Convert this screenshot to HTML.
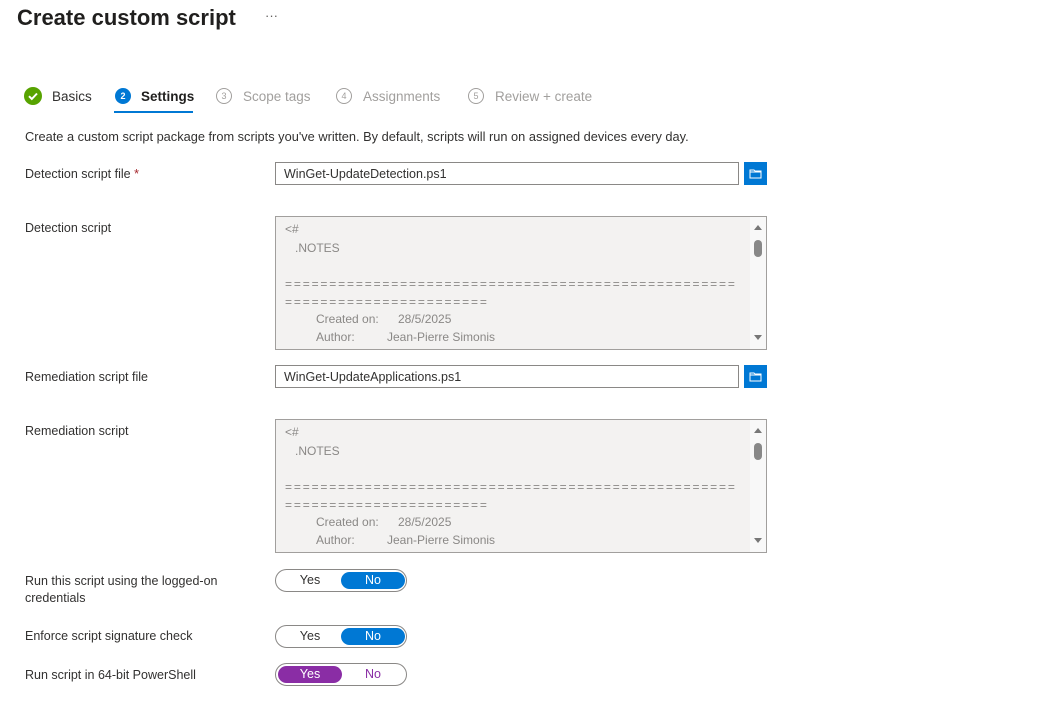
<!DOCTYPE html>
<html><head><style>
body{margin:0;width:1056px;height:723px;background:#fff;font-family:"Liberation Sans",sans-serif;color:#323130;position:relative;overflow:hidden}
.a{position:absolute;white-space:nowrap}
.lbl{font-size:12.5px;color:#323130}
.inp{position:absolute;border:1px solid #8a8886;height:23px;box-sizing:border-box;width:464px;left:275px;font-size:12.5px;padding:4px 8px;background:#fff}
.btn{position:absolute;left:744px;width:23px;height:23px;background:#0078d4}
.ta{position:absolute;left:275px;width:492px;height:134px;box-sizing:border-box;border:1px solid #a19f9d;background:#f3f2f1;font-size:12px;color:#8a8886;overflow:hidden}
.ta .l{position:absolute;left:9px;white-space:pre}
.ta .e{letter-spacing:1.85px}
.sb{position:absolute;right:0;top:0;width:16px;height:132px;background:#f8f8f8}
.tg{position:absolute;left:275px;width:132px;height:23px;box-sizing:border-box;border:1px solid #8a8886;border-radius:12px;font-size:12.5px}
.tg span{position:absolute;top:2px;width:64px;height:17px;line-height:17px;text-align:center;border-radius:9px}
.circ{position:absolute;top:88px;width:14px;height:14px;border:1px solid #a19f9d;border-radius:50%;font-size:9px;color:#a19f9d;text-align:center;line-height:14px}
</style></head><body>
<div class="a" style="left:17px;top:5px;font-size:22px;font-weight:600;color:#201f1e">Create custom script</div>
<div class="a" style="left:265px;top:8px;font-size:13px;color:#605e5c">···</div>

<svg class="a" style="left:24px;top:87px" width="18" height="18"><circle cx="9" cy="9" r="9" fill="#57a300"/><path d="M5 9.2l2.8 2.8L13 6.5" stroke="#fff" stroke-width="2" fill="none"/></svg>
<div class="a" style="left:52px;top:89px;font-size:13.5px">Basics</div>
<div class="a" style="left:115px;top:88px;width:16px;height:16px;border-radius:50%;background:#0078d4;color:#fff;font-size:9px;text-align:center;line-height:16px;font-weight:bold">2</div>
<div class="a" style="left:141px;top:89px;font-size:13.5px;font-weight:600;color:#201f1e">Settings</div>
<div class="a" style="left:114px;top:111px;width:79px;height:2px;background:#0078d4"></div>
<div class="circ" style="left:216px">3</div><div class="a" style="left:243px;top:89px;font-size:13.5px;color:#a19f9d">Scope tags</div>
<div class="circ" style="left:336px">4</div><div class="a" style="left:363px;top:89px;font-size:13.5px;color:#a19f9d">Assignments</div>
<div class="circ" style="left:468px">5</div><div class="a" style="left:495px;top:89px;font-size:13.5px;color:#a19f9d">Review + create</div>

<div class="a lbl" style="left:25px;top:129px;font-size:12.8px">Create a custom script package from scripts you've written. By default, scripts will run on assigned devices every day.</div>

<div class="a lbl" style="left:25px;top:167px">Detection script file <span style="color:#a4262c">*</span></div>
<div class="inp" style="top:162px">WinGet-UpdateDetection.ps1</div>
<div class="btn" style="top:162px"><svg width="23" height="23"><path d="M6 8h4l1 1h6v7H6z M6 10h11" stroke="#fff" fill="none"/></svg></div>

<div class="a lbl" style="left:25px;top:221px">Detection script</div>
<div class="ta" style="top:216px">
<div class="l" style="top:5px">&lt;#</div><div class="l" style="top:24px">   .NOTES</div>
<div class="l e" style="top:60px">===================================================</div>
<div class="l e" style="top:78px">=======================</div>
<div class="l" style="top:95px;left:40px">Created on:</div><div class="l" style="top:95px;left:122px">28/5/2025</div>
<div class="l" style="top:113px;left:40px">Author:</div><div class="l" style="top:113px;left:111px">Jean-Pierre Simonis</div>
<div class="sb"><div style="position:absolute;left:4px;top:8px;border:4px solid transparent;border-bottom:5px solid #777;border-top:0"></div><div style="position:absolute;left:4px;top:23px;width:8px;height:17px;border-radius:4px;background:#888"></div><div style="position:absolute;left:4px;top:118px;border:4px solid transparent;border-top:5px solid #777;border-bottom:0"></div></div>
</div>

<div class="a lbl" style="left:25px;top:370px">Remediation script file</div>
<div class="inp" style="top:365px">WinGet-UpdateApplications.ps1</div>
<div class="btn" style="top:365px"><svg width="23" height="23"><path d="M6 8h4l1 1h6v7H6z M6 10h11" stroke="#fff" fill="none"/></svg></div>

<div class="a lbl" style="left:25px;top:424px">Remediation script</div>
<div class="ta" style="top:419px">
<div class="l" style="top:5px">&lt;#</div><div class="l" style="top:24px">   .NOTES</div>
<div class="l e" style="top:60px">===================================================</div>
<div class="l e" style="top:78px">=======================</div>
<div class="l" style="top:95px;left:40px">Created on:</div><div class="l" style="top:95px;left:122px">28/5/2025</div>
<div class="l" style="top:113px;left:40px">Author:</div><div class="l" style="top:113px;left:111px">Jean-Pierre Simonis</div>
<div class="sb"><div style="position:absolute;left:4px;top:8px;border:4px solid transparent;border-bottom:5px solid #777;border-top:0"></div><div style="position:absolute;left:4px;top:23px;width:8px;height:17px;border-radius:4px;background:#888"></div><div style="position:absolute;left:4px;top:118px;border:4px solid transparent;border-top:5px solid #777;border-bottom:0"></div></div>
</div>

<div class="a lbl" style="left:25px;top:573px;line-height:17px">Run this script using the logged-on<br>credentials</div>
<div class="tg" style="top:569px"><span style="left:2px">Yes</span><span style="left:65px;background:#0078d4;color:#fff">No</span></div>
<div class="a lbl" style="left:25px;top:629px">Enforce script signature check</div>
<div class="tg" style="top:625px"><span style="left:2px">Yes</span><span style="left:65px;background:#0078d4;color:#fff">No</span></div>
<div class="a lbl" style="left:25px;top:668px">Run script in 64-bit PowerShell</div>
<div class="tg" style="top:663px"><span style="left:2px;background:#8a2da5;color:#fff">Yes</span><span style="left:65px;color:#8a2da5">No</span></div>
</body></html>
